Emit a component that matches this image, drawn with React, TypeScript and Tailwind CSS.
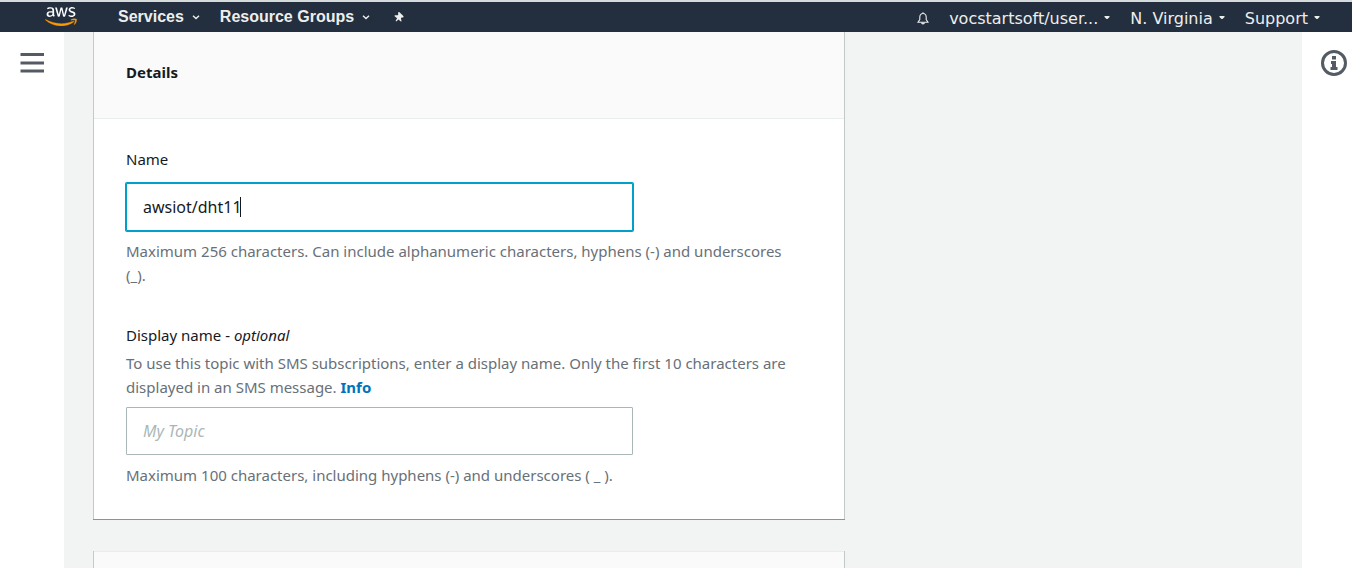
import React from 'react';

function Caret({ className }: { className: string }) {
  return (
    <svg viewBox="0 0 8 5" className={className} fill="none" stroke="currentColor" strokeWidth="1.4" aria-hidden="true">
      <path d="M1 0.8 L4 3.6 L7 0.8" />
    </svg>
  );
}

function SmallCaret() {
  return (
    <svg viewBox="0 0 6 4" className="mb-0.5 h-1 w-1.5" fill="currentColor" aria-hidden="true">
      <path d="M0.500 0h5v1L3.500 3H2.500L0.500 1z" />
    </svg>
  );
}

function AwsLogo() {
  return (
    <svg viewBox="0 0 304 182" className="h-[19px] w-8" role="img" aria-label="AWS">
      <path fill="#ffffff" d="M86.4,66.4c0,3.7,0.4,6.7,1.1,8.9c0.8,2.2,1.8,4.6,3.2,7.2c0.5,0.8,0.7,1.6,0.7,2.3c0,1-0.6,2-1.9,3l-6.3,4.2c-0.9,0.6-1.8,0.9-2.6,0.9c-1,0-2-0.5-3-1.4C76.200,90,75,88.400,74,86.800c-1-1.700-2-3.600-3.100-5.900c-7.800,9.200-17.600,13.800-29.400,13.800c-8.400,0-15.100-2.400-20-7.200c-4.900-4.800-7.400-11.200-7.400-19.200c0-8.500,3-15.400,9.100-20.600c6.100-5.200,14.200-7.800,24.500-7.800c3.400,0,6.900,0.300,10.600,0.800c3.700,0.500,7.500,1.300,11.500,2.200v-7.300c0-7.600-1.600-12.900-4.700-16c-3.200-3.100-8.600-4.600-16.300-4.600c-3.500,0-7.100,0.400-10.800,1.300c-3.700,0.900-7.300,2-10.800,3.400c-1.600,0.700-2.800,1.100-3.500,1.300c-0.700,0.200-1.200,0.300-1.600,0.300c-1.400,0-2.100-1-2.100-3.100v-4.900c0-1.600,0.200-2.800,0.700-3.500c0.500-0.700,1.400-1.400,2.800-2.100c3.500-1.800,7.700-3.300,12.600-4.500c4.900-1.300,10.100-1.900,15.600-1.900c11.900,0,20.600,2.700,26.200,8.100c5.500,5.400,8.300,13.600,8.300,24.600V66.400z M45.800,81.600c3.300,0,6.700-0.600,10.300-1.800c3.600-1.200,6.800-3.400,9.500-6.400c1.600-1.900,2.800-4,3.400-6.400c0.600-2.400,1-5.300,1-8.700v-4.200c-2.900-0.700-6-1.300-9.200-1.700c-3.200-0.400-6.300-0.600-9.400-0.600c-6.700,0-11.600,1.300-14.900,4c-3.300,2.700-4.900,6.500-4.900,11.500c0,4.700,1.200,8.200,3.700,10.600C37.700,80.400,41.200,81.600,45.800,81.600z M126.100,92.400c-1.800,0-3-0.300-3.800-1c-0.800-0.600-1.500-2-2.100-3.900L96.700,10.200c-0.600-2-0.900-3.300-0.900-4c0-1.600,0.800-2.500,2.400-2.500h9.800c1.900,0,3.200,0.300,3.900,1c0.800,0.600,1.400,2,2,3.900l16.800,66.200l15.600-66.200c0.500-2,1.100-3.300,1.900-3.900c0.800-0.600,2.200-1,4-1h8c1.900,0,3.200,0.300,4,1c0.800,0.600,1.500,2,1.900,3.900l15.800,67l17.300-67c0.600-2,1.300-3.300,2-3.900c0.800-0.600,2.100-1,3.900-1h9.300c1.600,0,2.500,0.800,2.500,2.500c0,0.500-0.100,1-0.200,1.600c-0.100,0.600-0.300,1.400-0.700,2.500l-24.100,77.300c-0.600,2-1.300,3.300-2.100,3.900c-0.800,0.600-2.100,1-3.800,1h-8.600c-1.900,0-3.200-0.300-4-1c-0.800-0.700-1.500-2-1.900-4L156,23l-15.400,64.400c-0.500,2-1.100,3.300-1.900,4c-0.800,0.700-2.200,1-4,1H126.100z M254.600,95.100c-5.200,0-10.400-0.600-15.400-1.800c-5-1.200-8.900-2.500-11.500-4c-1.600-0.900-2.700-1.900-3.100-2.800c-0.400-0.900-0.600-1.900-0.600-2.800v-5.100c0-2.100,0.800-3.100,2.300-3.100c0.600,0,1.200,0.100,1.800,0.300c0.600,0.200,1.500,0.600,2.500,1c3.400,1.500,7.100,2.700,11,3.500c4,0.800,7.900,1.200,11.900,1.200c6.300,0,11.200-1.100,14.600-3.300c3.400-2.200,5.200-5.400,5.200-9.500c0-2.800-0.900-5.100-2.700-7c-1.800-1.900-5.200-3.600-10.100-5.200L246,52c-7.300-2.300-12.700-5.700-16-10.200c-3.300-4.400-5-9.300-5-14.500c0-4.200,0.900-7.900,2.700-11.100c1.800-3.200,4.200-6,7.200-8.200c3-2.300,6.400-4,10.400-5.200c4-1.200,8.200-1.700,12.600-1.700c2.200,0,4.500,0.100,6.700,0.400c2.300,0.300,4.400,0.700,6.500,1.100c2,0.500,3.900,1,5.700,1.600c1.800,0.600,3.200,1.200,4.200,1.800c1.400,0.800,2.400,1.600,3,2.500c0.600,0.800,0.900,1.900,0.900,3.300v4.700c0,2.100-0.800,3.200-2.300,3.200c-0.800,0-2.100-0.400-3.800-1.200c-5.700-2.600-12.100-3.900-19.200-3.900c-5.700,0-10.200,0.900-13.300,2.800c-3.100,1.900-4.700,4.800-4.700,8.900c0,2.800,1,5.200,3,7.100c2,1.900,5.700,3.800,11,5.500l14.200,4.500c7.200,2.300,12.400,5.500,15.500,9.600c3.100,4.100,4.600,8.800,4.600,14c0,4.300-0.900,8.200-2.600,11.600c-1.800,3.400-4.200,6.400-7.300,8.800c-3.100,2.500-6.800,4.300-11.100,5.600C264.400,94.400,259.700,95.100,254.600,95.100z" />
      <path fill="#ff9900" stroke="#ff9900" strokeWidth="3" d="M273.500,143.700c-32.900,24.300-80.700,37.200-121.800,37.200c-57.600,0-109.500-21.300-148.700-56.700c-3.100-2.800-0.300-6.600,3.400-4.400c42.400,24.600,94.700,39.500,148.800,39.500c36.500,0,76.600-7.600,113.500-23.200C274.200,133.600,278.900,139.700,273.500,143.700z M287.200,128.100c-4.200-5.400-27.800-2.600-38.500-1.300c-3.200,0.400-3.700-2.400-0.800-4.500c18.800-13.200,49.700-9.400,53.300-5c3.600,4.500-1,35.400-18.600,50.200c-2.700,2.300-5.300,1.100-4.100-1.900C282.500,155.700,291.400,133.400,287.200,128.100z" />
    </svg>
  );
}

function Pin() {
  return (
    <svg viewBox="0 0 10 10" className="h-2.5 w-2.5" fill="currentColor" aria-hidden="true">
      <path d="M4 0.500 L5.200 0 L9.600 4.200 L9.200 5.400 L7.600 5.400 L6.900 6.200 L7.600 9.200 L6.800 9.600 L4.500 7.400 L2.200 9.400 L1.600 8.800 L3.100 6.200 L0.400 4 L0.900 3.200 L3.700 3.200 L4.300 2.400 Z" />
    </svg>
  );
}

function Bell() {
  return (
    <svg viewBox="0 0 12 13" className="mb-0.5 h-[13px] w-3" fill="none" stroke="currentColor" strokeWidth="1.100" aria-hidden="true">
      <path d="M6 0.300V1.500M6 1.500C4 1.500 2.800 3 2.800 5V7.500L1 10.200H11L9.200 7.500V5C9.200 3 8 1.500 6 1.500Z" />
      <path d="M4.600 10.800C4.800 12.300 7.200 12.300 7.400 10.800" fill="currentColor" />
    </svg>
  );
}

function TopBar() {
  const boldItem = 'flex items-center gap-2 text-base font-bold';
  const item = 'flex items-center gap-1.5 whitespace-nowrap text-base leading-6';
  return (
    <header className="flex h-8 shrink-0 items-center justify-between border-t-2 border-[#d5dbdb] bg-[#232f3e] pr-8 pl-[45px] text-[#eeeeee]">
      <nav className="flex items-center pb-px font-['Liberation_Sans',Arial,sans-serif]">
        <a href="#home" className="mr-[41px]"><AwsLogo /></a>
        <button type="button" className={`${boldItem} mr-5`}>Services<Caret className="mt-0.5 h-[5px] w-2" /></button>
        <button type="button" className={`${boldItem} mr-6`}>Resource Groups<Caret className="mt-0.5 h-[5px] w-2" /></button>
        <button type="button" aria-label="Pin shortcuts"><Pin /></button>
      </nav>
      <nav className="flex items-center pt-1 font-['DejaVu_Sans',Verdana,sans-serif]">
        <button type="button" aria-label="Notifications" className="mr-5"><Bell /></button>
        <button type="button" className={`${item} mr-5`}>vocstartsoft/user...<SmallCaret /></button>
        <button type="button" className={`${item} mr-5`}>N. Virginia<SmallCaret /></button>
        <button type="button" className={item}>Support<SmallCaret /></button>
      </nav>
    </header>
  );
}

const cardClass = 'border-x border-x-[#c3c9c9] bg-white shadow-[0_1px_0_0_#879596]';

export default function App() {
  return (
    <div className="flex h-screen flex-col overflow-hidden bg-white font-['Noto_Sans',sans-serif] text-[15px] leading-6 text-[#16191f]">
      <TopBar />
      <div className="flex min-h-0 flex-1">
        <aside className="w-16 shrink-0 pt-5 pl-5">
          <button type="button" aria-label="Open navigation" className="block">
            <svg viewBox="0 0 24 22" className="h-[22px] w-6" fill="#545b64" aria-hidden="true">
              <path d="M0.500 1h23.500v3H0.500zM0.500 9.500h23.500v3H0.500zM0.500 17.500h23.500v3H0.500z" />
            </svg>
          </button>
        </aside>
        <main className="min-w-0 flex-1 overflow-hidden bg-[#f2f3f3] pl-[29px]">
          <form className="flex max-w-[752px] flex-col gap-8">
            <section className={cardClass}>
              <div className="border-b border-[#eaeded] bg-[#fafafa] px-8 pt-7 pb-[34px]">
                <h2 className="font-bold">Details</h2>
              </div>
              <div className="px-8 pt-7 pb-8">
                <label htmlFor="name" className="block">Name</label>
                <div className="relative mt-3 max-w-[507px]">
                  <input
                    id="name"
                    type="text"
                    defaultValue="awsiot/dht11"
                    aria-describedby="name-hint"
                    className="block h-12 w-full rounded-[1px] border border-[#00a1c9] bg-white px-4 text-base shadow-[0_0_0_1px_#00a1c9] outline-none"
                  />
                  <span className="absolute top-3.5 left-[114px] h-5 w-px bg-[#16191f]" />
                </div>
                <p id="name-hint" className="mt-2 max-w-[672px] text-[#687078]">
                  Maximum 256 characters. Can include alphanumeric characters, hyphens (-) and underscores (_).
                </p>
                <label htmlFor="display-name" className="mt-9 block">Display name - <i>optional</i></label>
                <p className="mt-1 max-w-[672px] text-[#687078]">
                  To use this topic with SMS subscriptions, enter a display name. Only the first 10 characters are
                  displayed in an SMS message. <a href="#info" className="font-bold text-[#0073bb]">Info</a>
                </p>
                <input
                  id="display-name"
                  type="text"
                  placeholder="My Topic"
                  aria-describedby="display-hint"
                  className="mt-2 block h-12 w-full max-w-[507px] rounded-[1px] border border-[#aab7b8] bg-white px-4 text-base outline-none placeholder:text-[#aab7b8] placeholder:italic"
                />
                <p id="display-hint" className="mt-2 text-[#687078]">
                  Maximum 100 characters, including hyphens (-) and underscores ( _ ).
                </p>
              </div>
            </section>
            <section className={cardClass}>
              <div className="h-20 border-t border-[#eaeded] bg-[#fafafa]" />
            </section>
          </form>
        </main>
        <aside className="flex w-[50px] shrink-0 items-start justify-end pt-[18px] pr-[5px]">
          <button type="button" aria-label="Open help panel">
            <svg viewBox="0 0 26 26" className="block h-[26px] w-[26px]" aria-hidden="true">
              <circle cx="13" cy="13" r="11.500" fill="none" stroke="#545b64" strokeWidth="3" />
              <path fill="#545b64" d="M11 6h4v3.500h-4zM10 11h5v6h1.500v3h-7v-3H11v-3h-1z" />
            </svg>
          </button>
        </aside>
      </div>
    </div>
  );
}
